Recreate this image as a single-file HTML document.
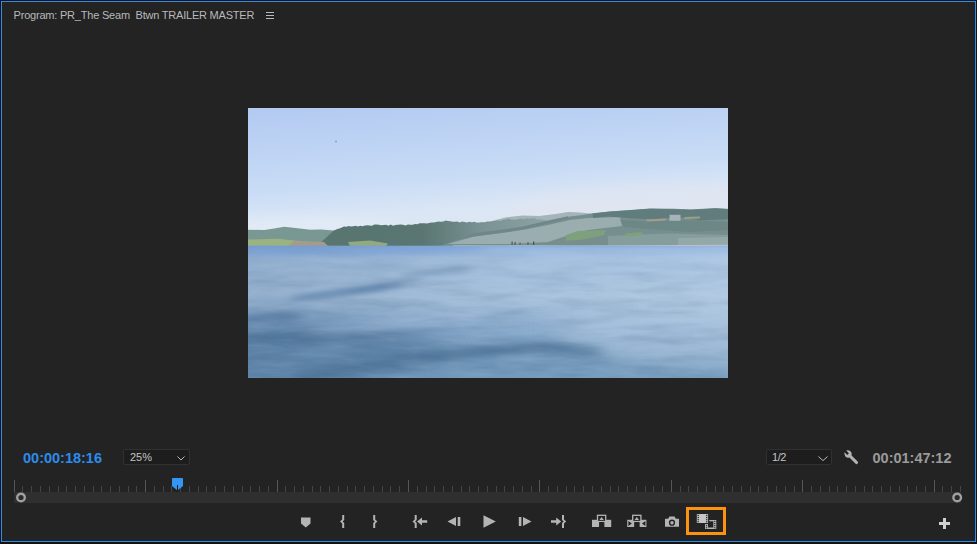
<!DOCTYPE html>
<html lang="en">
<head>
<meta charset="utf-8">
<title>Program Monitor</title>
<style>
  html, body { margin: 0; padding: 0; }
  body {
    width: 977px; height: 544px; overflow: hidden;
    background: #121212;
    font-family: "Liberation Sans", sans-serif;
    position: relative;
  }
  .panel {
    position: absolute; left: 1px; top: 1px; width: 973px; height: 539px;
    border: 1px solid #2d8ceb; background: #232323;
  }
  .abs { position: absolute; }
  .title {
    left: 13.6px; top: 8px; height: 14px; line-height: 14px;
    font-size: 11px; color: #b9b9b9; white-space: pre; letter-spacing: -0.21px;
  }
  .burger { left: 266px; top: 12px; width: 8px; height: 7px; }
  .burger i { display: block; height: 1px; background: #b9b9b9; margin-bottom: 2px; }
  .tc {
    font-weight: bold; font-size: 14.5px; line-height: 16px; height: 16px; white-space: pre;
  }
  .tc1 { left: 23px; top: 449.6px; color: #2d8ceb; }
  .tc2 { left: 872.5px; top: 449.6px; color: #9b9b9b; }
  .dd {
    box-sizing: border-box; height: 16px; border: 1px solid #313131; background: #1d1d1d;
    border-radius: 2px; color: #c4c4c4; font-size: 11px; line-height: 15px; padding-left: 6px;
  }
  .dd1 { left: 123px; top: 449px; width: 67px; }
  .dd2 { left: 766px; top: 449px; width: 66px; padding-left: 5px; letter-spacing: -0.4px; }
  .dd.dd2 svg { right: 3px; top: 5.5px; }
  .dd svg { position: absolute; right: 4.5px; top: 5.5px; }
  .track { left: 14px; top: 492px; width: 947px; height: 11px; background: #2f2f2f; }
  .ruler { left: 0; top: 476px; }
  .controls { left: 0; top: 504px; }
  .hl { left: 686px; top: 507px; width: 34px; height: 22px; border: 3px solid #fb9210; }
</style>
</head>
<body>
<div class="panel"></div>

<div class="abs title">Program: PR_The Seam  Btwn TRAILER MASTER</div>
<div class="abs burger"><i></i><i></i><i></i></div>

<!-- VIDEO FRAME -->
<svg class="abs" style="left:248px;top:108px" width="480" height="270" viewBox="0 0 480 270">
  <defs>
    <linearGradient id="sky" gradientUnits="userSpaceOnUse" x1="0" y1="0" x2="10.9" y2="149.2">
      <stop offset="0" stop-color="#b3caf1"/>
      <stop offset="0.28" stop-color="#bdd3f4"/>
      <stop offset="0.56" stop-color="#c9dcf6"/>
      <stop offset="0.77" stop-color="#dae6f5"/>
      <stop offset="1" stop-color="#e0e8f2"/>
    </linearGradient>
    <linearGradient id="water" x1="0" y1="0" x2="0" y2="1">
      <stop offset="0" stop-color="#8cb2e0"/>
      <stop offset="0.025" stop-color="#9dbde4"/>
      <stop offset="0.09" stop-color="#abc6e4"/>
      <stop offset="0.39" stop-color="#afc8e1"/>
      <stop offset="0.5" stop-color="#a0bdda"/>
      <stop offset="0.65" stop-color="#8daecf"/>
      <stop offset="0.8" stop-color="#7ca1c3"/>
      <stop offset="1" stop-color="#779dbe"/>
    </linearGradient>
    <linearGradient id="wlr" x1="0" y1="0" x2="1" y2="0">
      <stop offset="0" stop-color="#4d7098" stop-opacity="0.28"/>
      <stop offset="0.3" stop-color="#4d7098" stop-opacity="0.17"/>
      <stop offset="0.6" stop-color="#4d7098" stop-opacity="0.05"/>
      <stop offset="1" stop-color="#c3d5e8" stop-opacity="0.12"/>
    </linearGradient>
    <linearGradient id="forest" gradientUnits="userSpaceOnUse" x1="90" y1="0" x2="300" y2="0">
      <stop offset="0" stop-color="#587570"/>
      <stop offset="0.4" stop-color="#5a7672"/>
      <stop offset="0.7" stop-color="#7b9394"/>
      <stop offset="1" stop-color="#8da2a4"/>
    </linearGradient>
    <filter id="b12" x="-30%" y="-100%" width="160%" height="300%"><feGaussianBlur stdDeviation="14 8"/></filter>
    <filter id="b8" x="-30%" y="-100%" width="160%" height="300%"><feGaussianBlur stdDeviation="8 4"/></filter>
    <filter id="b5" x="-30%" y="-100%" width="160%" height="300%"><feGaussianBlur stdDeviation="5 2.5"/></filter>
    <filter id="b1" x="-5%" y="-20%" width="110%" height="140%"><feGaussianBlur stdDeviation="0.5"/></filter>
    <filter id="rip" x="0" y="0" width="100%" height="100%" color-interpolation-filters="sRGB">
      <feTurbulence type="fractalNoise" baseFrequency="0.018 0.11" numOctaves="3" seed="11" result="n"/>
      <feColorMatrix type="matrix" values="0 0 0 0 0.16  0 0 0 0 0.3  0 0 0 0 0.45  1.6 0 0 0 -0.62"/>
    </filter>
    <filter id="rip2" x="0" y="0" width="100%" height="100%" color-interpolation-filters="sRGB">
      <feTurbulence type="fractalNoise" baseFrequency="0.02 0.12" numOctaves="3" seed="4" result="n"/>
      <feColorMatrix type="matrix" values="0 0 0 0 0.8  0 0 0 0 0.88  0 0 0 0 0.96  1.6 0 0 0 -0.66"/>
    </filter>
    <linearGradient id="fade" x1="0" y1="0" x2="0" y2="1">
      <stop offset="0" stop-color="#fff" stop-opacity="0.15"/>
      <stop offset="0.25" stop-color="#fff" stop-opacity="0.8"/>
      <stop offset="1" stop-color="#fff" stop-opacity="1"/>
    </linearGradient>
    <mask id="wm"><rect y="137.6" width="480" height="133" fill="url(#fade)"/></mask>
    <clipPath id="wc"><rect y="137.6" width="480" height="133"/></clipPath>
    <clipPath id="vc"><rect width="480" height="270"/></clipPath>
  </defs>
  <g clip-path="url(#vc)">
  <rect width="480" height="140" fill="url(#sky)"/>
  <circle cx="88" cy="33.5" r="1" fill="#8fa2c4" filter="url(#b1)"/>
  <ellipse cx="430" cy="100" rx="170" ry="26" fill="#e6e4ec" opacity="0.3" filter="url(#b8)"/>
  <ellipse cx="40" cy="122" rx="120" ry="14" fill="#eef3f7" opacity="0.3" filter="url(#b8)"/>
  <g filter="url(#b1)">
    <!-- far hill (left) -->
    <path d="M-2 121.7 L16.4 122 L26.2 120.4 L36 118.8 L47.5 120.1 L62.2 121.7 L73.7 121.4 L85.2 122.6 L95 121 L95 139 L-2 139 Z" fill="#7a9893"/>
    <!-- distant pale ridge (right of centre) -->
    <path d="M225 115 L241.9 113.4 L258.3 109.3 L274.6 107.6 L291 108.1 L307.4 106 L320 103.9 L332 104.5 L346 106 L346 120 L225 125 Z" fill="#a3b5b8"/>
    <!-- forest hill -->
    <path d="M85.2 123.0 L89.3 120.9 L91.5 120.4 L93.8 119.4 L96.0 118.6 L98.3 118.8 L100.6 118.0 L103.0 118.6 L105.3 118.3 L107.6 117.8 L109.9 118.4 L112.3 117.7 L114.6 118.2 L116.9 117.5 L119.3 117.2 L121.6 117.5 L124.0 117.8 L126.3 116.6 L128.7 116.5 L131.0 116.8 L133.3 117.3 L135.7 116.9 L138.0 116.8 L140.4 117.7 L142.7 116.5 L145.1 117.8 L147.4 117.1 L149.9 116.8 L152.4 116.6 L155.0 116.8 L157.5 117.4 L160.0 116.4 L162.3 116.7 L164.7 116.7 L167.0 116.1 L169.4 116.2 L171.7 115.3 L174.1 115.2 L176.4 115.2 L178.8 115.5 L181.1 114.9 L183.5 114.4 L185.9 114.5 L188.2 114.0 L190.6 113.5 L193.0 113.8 L195.3 113.4 L197.7 112.4 L200.0 113.1 L202.4 113.2 L204.7 113.8 L207.0 113.8 L209.3 113.4 L211.7 114.5 L214.0 113.5 L216.5 114.0 L218.9 114.5 L221.4 113.8 L223.9 114.3 L226.3 113.8 L228.8 114.7 L231.4 114.7 L234.0 114.2 L236.7 114.4 L239.3 113.4 L241.9 113.7 L244.2 113.2 L246.5 112.9 L248.8 112.4 L251.1 112.7 L253.4 112.5 L255.7 111.6 L258.0 111.5 L260.2 110.6 L262.5 111.5 L264.8 111.4 L267.0 111.8 L269.2 111.5 L271.5 110.7 L273.8 110.8 L276.0 111.2 L278.2 110.3 L280.5 110.8 L282.8 110.4 L285.0 110.3 L287.5 110.5 L290.0 111.8 L292.5 111.3 L295.0 111.8 L297.5 112.3 L300 113 L225 139 L68 139 Z" fill="url(#forest)"/>
    <!-- dune -->
    <path d="M190 139 L197.7 136 L225.5 125.7 L258.3 121.6 L274.6 119.1 L299.2 113.4 L320 108.8 L336.4 106.7 L344.6 105.3 L361 103.4 L385.5 101.7 L401.9 100.4 L426.5 100.8 L442.8 101.4 L467.4 100.1 L482 100.9 L482 139 Z" fill="#768f8e"/>
    <!-- lighter lower dune face -->
    <path d="M200 136 L226 128.5 L258 124.5 L280 121 L300 117 L322 112 L340 110 L372 109 L374 118 L340 122 L318 128 L300 134 L260 136 Z" fill="#9aadaf"/>
    <!-- ridge shadow -->
    <path d="M205 133 L225.5 125.2 L258.3 121 L274.6 118.5 L299.2 112.8 L320 108.2 L320 110.5 L299 115.5 L275 121.5 L258 124 L226 128.5 Z" fill="#6f8688"/>
    <!-- dark top band -->
    <path d="M344.6 105.6 L361 103.7 L385.5 102 L401.9 100.8 L426.5 101.2 L442.8 101.8 L467.4 100.5 L482 101.2 L482 111 L452 112.5 L430 109 L404 111.5 L380 110 L360 108.5 L345 110 Z" fill="#617c7c"/>
    <path d="M372 112 L400 113.5 L430 112 L482 114 L482 122 L440 124 L400 121 L376 119 Z" fill="#6c8786"/>
    <path d="M421.5 106.8 h11 v6 h-11 Z" fill="#a6b4ba"/>
    <path d="M398 111.5 L418 110.5 L418 112.5 L399 113.6 Z" fill="#a79b8c"/>
    <path d="M436 109 L452 108.6 L452 110.4 L437 111 Z" fill="#9d9f88"/>
    <path d="M360 128 L420 125.5 L482 127 L482 137 L360 137 Z" fill="#869d9d"/>
    <path d="M430 130 L482 129 L482 137 L430 137 Z" fill="#93a8a9"/>
    <!-- green patches -->
    <path d="M0 131.5 L30 130.8 L46 132.5 L75 135 L78 138 L0 138 Z" fill="#9bb381"/>
    <path d="M46 133 L76 134 L80 138 L40 138 Z" fill="#a59b8b"/>
    <path d="M100 134 L122 132.5 L140 135.5 L138 138 L102 138 Z" fill="#93a97f"/>
    <path d="M318 127 L330 123 L358 122 L356 127 L335 131.5 L318 133 Z" fill="#7fa07c"/>
    <path d="M377 125.5 L394 124 L395 127.5 L378 128.5 Z" fill="#7fa07c"/>
    <!-- people -->
    <path d="M263.5 133.5 h1.2 v3.5 h-1.2z M266.5 134 h1.2 v3 h-1.2z M271.5 134.5 h1 v2.5 h-1z M279.5 134 h1 v3 h-1z M285 133.5 h1.3 v3.5 h-1.3z" fill="#4d5563"/>
    <!-- sand strip -->
    <path d="M205 137.2 L330 137.6 L482 136.8 L482 139 L205 139 Z" fill="#c4c3c6"/>
  </g>
  <!-- water -->
  <g clip-path="url(#wc)">
  <rect y="137.6" width="480" height="133" fill="url(#water)"/>
  <rect y="137.6" width="480" height="133" fill="url(#wlr)"/>
  <ellipse cx="40" cy="141" rx="200" ry="7" fill="#6f9ad4" opacity="0.45" filter="url(#b5)"/>
  <g filter="url(#b12)">
    <ellipse cx="30" cy="240" rx="170" ry="32" fill="#4c7196" opacity="0.45"/>
    <ellipse cx="440" cy="222" rx="130" ry="34" fill="#b6cce4" opacity="0.5"/>
  </g>
  <g filter="url(#b8)">
    <ellipse cx="60" cy="229" rx="90" ry="6" fill="#46698f" opacity="0.6" transform="rotate(-3 60 229)"/>
    <path d="M50 270 C110 260 170 250 240 243 C290 238.500 320 240 350 245" fill="none" stroke="#476d90" stroke-width="9" stroke-linecap="round" opacity="0.8"/>
    <ellipse cx="150" cy="215" rx="90" ry="6" fill="#a3bedd" opacity="0.5" transform="rotate(-5 150 215)"/>
  </g>
  <g filter="url(#b5)">
    <ellipse cx="98" cy="184" rx="58" ry="3.8" fill="#5f84ab" opacity="0.9" transform="rotate(-7 98 184)"/>
    <ellipse cx="188" cy="164" rx="36" ry="2.3" fill="#6889ae" opacity="0.75" transform="rotate(-6 188 164)"/>
    <ellipse cx="150" cy="174" rx="26" ry="2.3" fill="#6889ae" opacity="0.6" transform="rotate(-6 150 174)"/>
    <ellipse cx="26" cy="209" rx="30" ry="4" fill="#54789f" opacity="0.75"/>
    <ellipse cx="40" cy="193" rx="40" ry="2.5" fill="#7d9dc2" opacity="0.5"/>
  </g>
  </g>
  <g mask="url(#wm)">
    <rect y="137.6" width="480" height="133" filter="url(#rip)" opacity="0.22"/>
    <rect y="137.6" width="480" height="133" filter="url(#rip2)" opacity="0.16"/>
  </g>
  </g>
</svg>


<div class="abs tc tc1">00:00:18:16</div>
<div class="abs dd dd1">25%<svg width="8" height="5" viewBox="0 0 8 5"><path d="M0.5 0.5 L4 4 L7.5 0.5" fill="none" stroke="#bbbbbb" stroke-width="1"/></svg></div>
<div class="abs dd dd2">1/2<svg width="10" height="6" viewBox="0 0 10 6"><path d="M0.5 0.5 L5 4.6 L9.5 0.5" fill="none" stroke="#bbbbbb" stroke-width="1"/></svg></div>
<svg class="abs" style="left:843px;top:449px" width="17" height="17" viewBox="0 0 17 17">
<path d="M3.2 1.6 A4 4 0 0 1 8.6 6.4 L14.6 12.4 A1.5 1.5 0 0 1 12.4 14.6 L6.4 8.6 A4 4 0 0 1 1.6 3.3 L4.2 5.9 L5.9 4.3 Z" fill="#b4b4b4"/></svg>
<div class="abs tc tc2">00:01:47:12</div>

<div class="abs track"></div>
<svg class="abs ruler" width="977" height="30" viewBox="0 0 977 30">
<path d="M14.5 4V16M145.5 4V16M277.5 4V16M408.5 4V16M539.5 4V16M671.5 4V16M802.5 4V16M934.5 4V16" stroke="#565656" stroke-width="1" fill="none"/>
<path d="M22.5 10V16M31.5 10V16M40.5 10V16M49.5 10V16M58.5 10V16M66.5 10V16M75.5 10V16M84.5 10V16M93.5 10V16M101.5 10V16M110.5 10V16M119.5 10V16M128.5 10V16M136.5 10V16M154.5 10V16M163.5 10V16M171.5 10V16M180.5 10V16M189.5 10V16M198.5 10V16M206.5 10V16M215.5 10V16M224.5 10V16M233.5 10V16M242.5 10V16M250.5 10V16M259.5 10V16M268.5 10V16M285.5 10V16M294.5 10V16M303.5 10V16M312.5 10V16M320.5 10V16M329.5 10V16M338.5 10V16M347.5 10V16M355.5 10V16M364.5 10V16M373.5 10V16M382.5 10V16M390.5 10V16M399.5 10V16M417.5 10V16M426.5 10V16M434.5 10V16M443.5 10V16M452.5 10V16M461.5 10V16M469.5 10V16M478.5 10V16M487.5 10V16M496.5 10V16M504.5 10V16M513.5 10V16M522.5 10V16M531.5 10V16M548.5 10V16M557.5 10V16M566.5 10V16M574.5 10V16M583.5 10V16M592.5 10V16M601.5 10V16M610.5 10V16M618.5 10V16M627.5 10V16M636.5 10V16M645.5 10V16M653.5 10V16M662.5 10V16M680.5 10V16M688.5 10V16M697.5 10V16M706.5 10V16M715.5 10V16M723.5 10V16M732.5 10V16M741.5 10V16M750.5 10V16M758.5 10V16M767.5 10V16M776.5 10V16M785.5 10V16M794.5 10V16M811.5 10V16M820.5 10V16M829.5 10V16M837.5 10V16M846.5 10V16M855.5 10V16M864.5 10V16M872.5 10V16M881.5 10V16M890.5 10V16M899.5 10V16M907.5 10V16M916.5 10V16M925.5 10V16M942.5 10V16M951.5 10V16M960.5 10V16" stroke="#434343" stroke-width="1" fill="none"/>
<circle cx="21" cy="21.5" r="3.8" fill="#2b2b2b" stroke="#a0a0a0" stroke-width="2.4"/>
<circle cx="957.2" cy="21.5" r="3.8" fill="#2b2b2b" stroke="#a0a0a0" stroke-width="2.4"/>
<path d="M172 2.5 q0 -0.5 0.5 -0.5 h10 q0.5 0 0.5 0.5 V10 L177.5 14.5 L172 10 Z" fill="#3595f3"/>
<path d="M177.5 9 V16" stroke="#1b1b1b" stroke-width="1"/>
</svg>
<svg class="abs controls" width="977" height="36" viewBox="0 0 977 36">
<path d="M301 13.5 h9.5 v6 l-4.75 4 l-4.75 -4 Z" fill="#b4b4b4"/>
<path d="M342.2 11 h2 v5 l-1.6 1.5 l1.6 1.5 v5 h-2 v-4.4 l-2.2 -2.1 l2.2 -2.1 Z" fill="#b4b4b4"/>
<path d="M375.2 11 h-2 v5 l1.6 1.5 l-1.6 1.5 v5 h2 v-4.4 l2.2 -2.1 l-2.2 -2.1 Z" fill="#b4b4b4"/>
<path d="M414.7 11 h2 v5 l-1.6 1.5 l1.6 1.5 v5 h-2 v-4.4 l-2.2 -2.1 l2.2 -2.1 Z" fill="#b4b4b4"/>
<path d="M417 17.5 l5 -4 v2.7 h5.2 v2.6 h-5.2 v2.7 Z" fill="#b4b4b4"/>
<path d="M447.5 17.5 l8.5 -4.5 v9 Z" fill="#b4b4b4"/><rect x="457.7" y="13" width="2.6" height="9" fill="#b4b4b4"/>
<path d="M483.5 11.3 L495.8 17.5 L483.5 23.7 Z" fill="#b4b4b4"/>
<rect x="518.8" y="13" width="2.6" height="9" fill="#b4b4b4"/><path d="M531.5 17.5 l-8.5 -4.5 v9 Z" fill="#b4b4b4"/>
<path d="M561.2 17.5 l-5 -4 v2.7 h-5.2 v2.6 h5.2 v2.7 Z" fill="#b4b4b4"/>
<path d="M564 11 h-2 v5 l1.6 1.5 l-1.6 1.5 v5 h2 v-4.4 l2.2 -2.1 l-2.2 -2.1 Z" fill="#b4b4b4"/>
<rect x="592" y="15.8" width="7.2" height="7.2" fill="#b4b4b4"/><rect x="604.2" y="15.8" width="7" height="7.2" fill="#b4b4b4"/><rect x="597.5" y="11.3" width="8.2" height="6.2" fill="#232323" stroke="#b4b4b4" stroke-width="1.3"/><path d="M599.4 15.9 l2.2 -2.9 l2.2 2.9 Z" fill="#b4b4b4"/><rect x="599.2" y="18.15" width="5" height="5" fill="#232323"/>
<rect x="627.2" y="15.8" width="7.2" height="7.2" fill="#b4b4b4"/><rect x="639.4000000000001" y="15.8" width="7" height="7.2" fill="#b4b4b4"/><rect x="632.7" y="11.3" width="8.2" height="6.2" fill="#232323" stroke="#b4b4b4" stroke-width="1.3"/><path d="M634.6 15.9 l2.2 -2.9 l2.2 2.9 Z" fill="#b4b4b4"/><rect x="634.4000000000001" y="18.15" width="5" height="5" fill="#232323"/><path d="M628.4000000000001 17 l3.4 2.5 l-3.4 2.5 Z" fill="#232323"/><path d="M645.4000000000001 17 l-3.4 2.5 l3.4 2.5 Z" fill="#232323"/>
<path d="M665 14.8 h3.2 l1.2 -2.3 h5.2 l1.2 2.3 h3.2 v8 h-14 Z" fill="#b4b4b4"/><circle cx="672" cy="18.7" r="3.1" fill="#232323"/><circle cx="672" cy="18.7" r="1.7" fill="#b4b4b4"/>
<rect x="705" y="16" width="11.3" height="9" fill="#b4b4b4"/>
<rect x="708" y="17.3" width="5.3" height="6.2" fill="#232323"/>
<rect x="705.9" y="16.9" width="1.2" height="1.1" fill="#232323"/><rect x="714.2" y="16.9" width="1.2" height="1.1" fill="#232323"/><rect x="705.9" y="19.0" width="1.2" height="1.1" fill="#232323"/><rect x="714.2" y="19.0" width="1.2" height="1.1" fill="#232323"/><rect x="705.9" y="21.099999999999998" width="1.2" height="1.1" fill="#232323"/><rect x="714.2" y="21.099999999999998" width="1.2" height="1.1" fill="#232323"/><rect x="705.9" y="23.2" width="1.2" height="1.1" fill="#232323"/><rect x="714.2" y="23.2" width="1.2" height="1.1" fill="#232323"/>
<rect x="695.8" y="9" width="13.5" height="11" fill="#232323"/>
<rect x="696.8" y="10" width="11.3" height="9" fill="#b4b4b4"/>
<rect x="699.2" y="10" width="6.5" height="9" fill="#c6c6c6"/>
<rect x="697.6" y="10.9" width="1.2" height="1.1" fill="#232323"/><rect x="706.1" y="10.9" width="1.2" height="1.1" fill="#232323"/><rect x="697.6" y="13.0" width="1.2" height="1.1" fill="#232323"/><rect x="706.1" y="13.0" width="1.2" height="1.1" fill="#232323"/><rect x="697.6" y="15.100000000000001" width="1.2" height="1.1" fill="#232323"/><rect x="706.1" y="15.100000000000001" width="1.2" height="1.1" fill="#232323"/><rect x="697.6" y="17.200000000000003" width="1.2" height="1.1" fill="#232323"/><rect x="706.1" y="17.200000000000003" width="1.2" height="1.1" fill="#232323"/>
<path d="M939 18 h4 v-4 h3 v4 h4 v3 h-4 v4 h-3 v-4 h-4 Z" fill="#d0d0d0"/>
</svg>
<div class="abs hl"></div>
</body>
</html>
